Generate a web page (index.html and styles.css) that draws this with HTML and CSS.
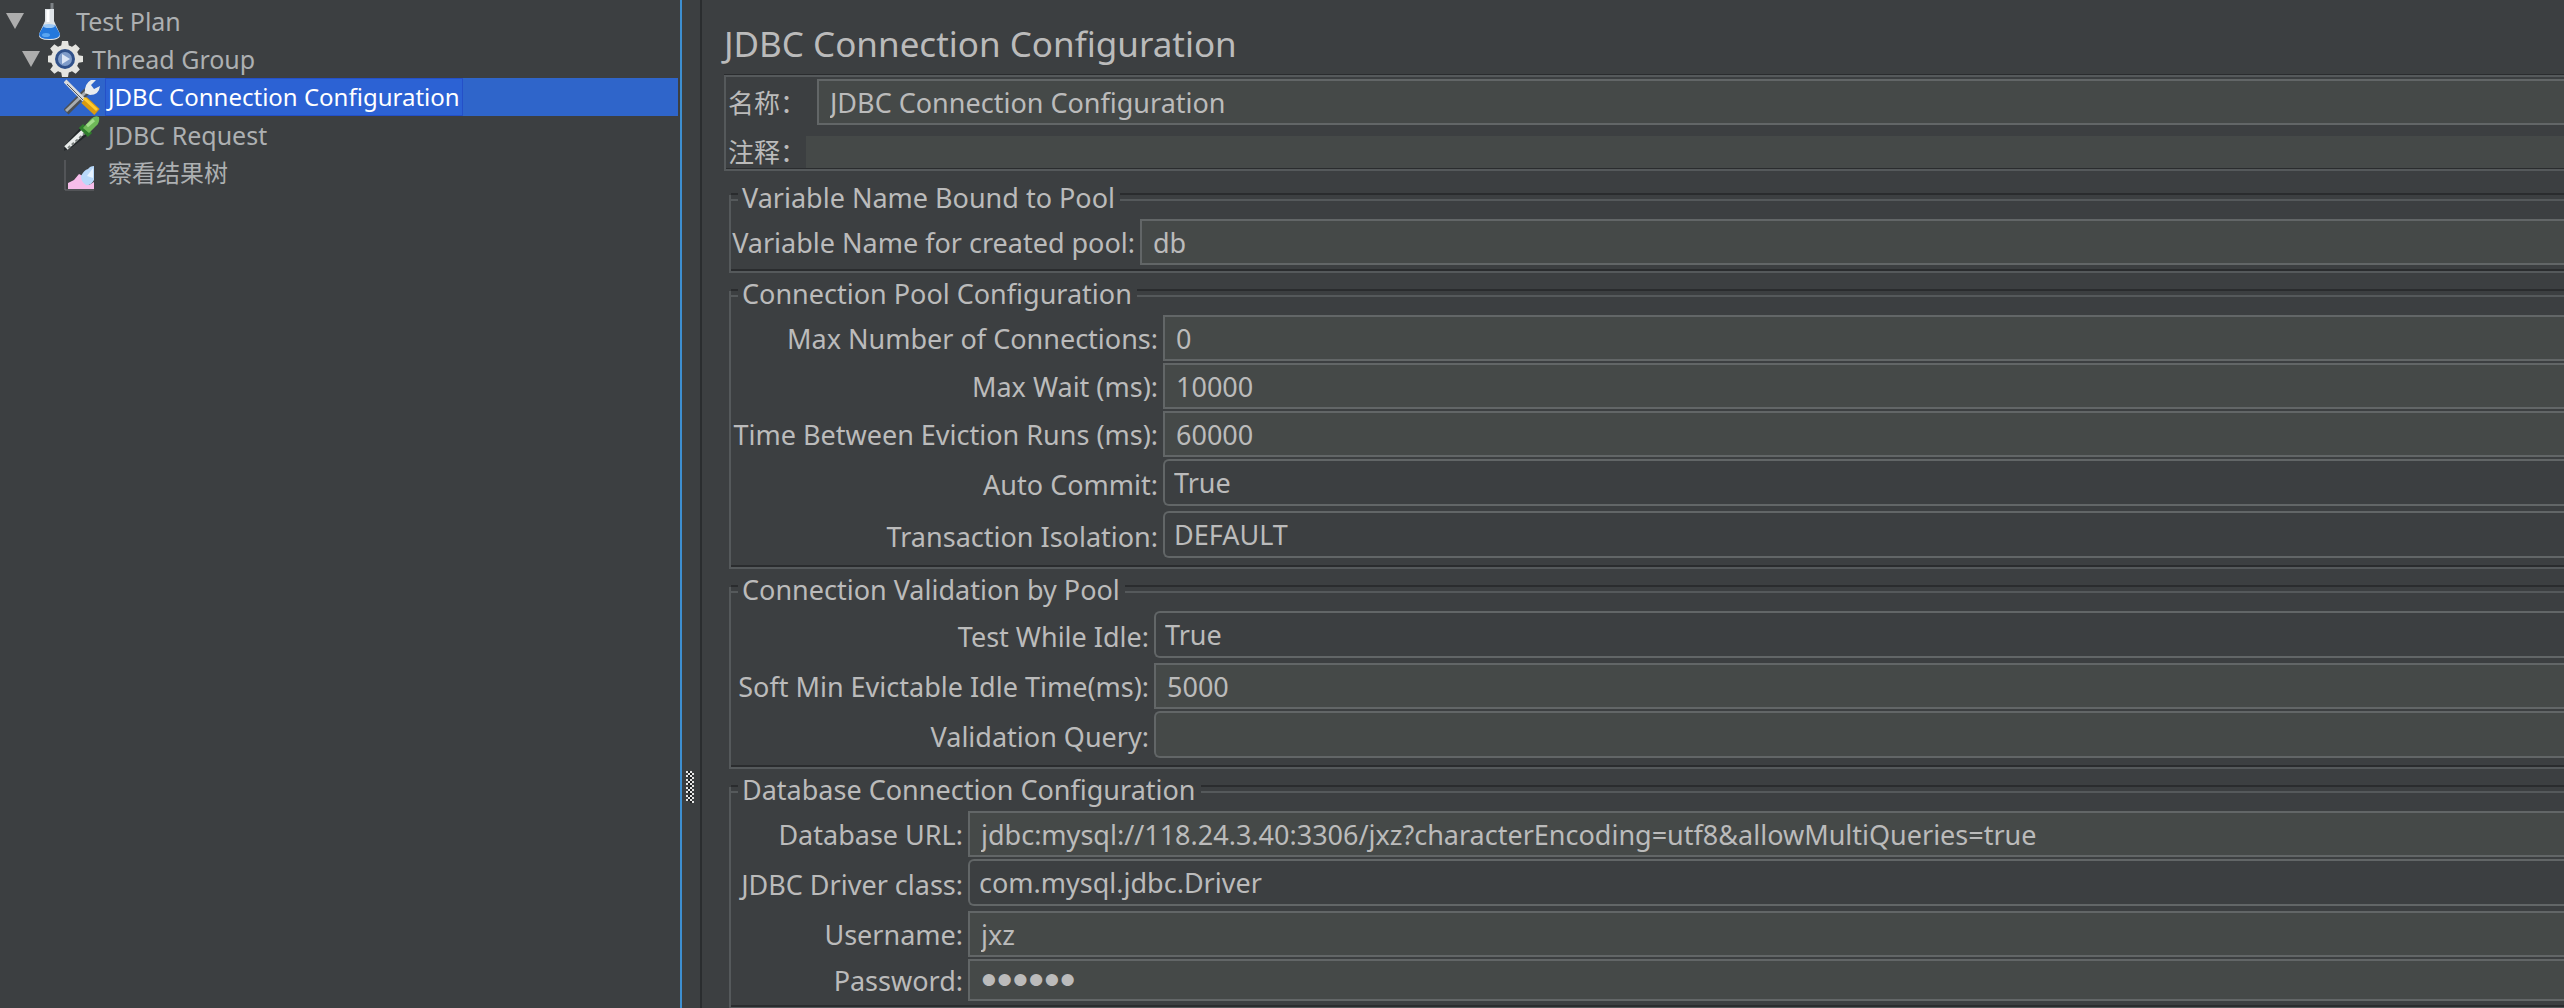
FILE: index.html
```html
<!DOCTYPE html>
<html lang="zh-CN">
<head>
  <meta charset="UTF-8">
  <meta name="viewport" content="width=device-width, initial-scale=1.0">
  <title>JDBC Connection Configuration</title>
  <link rel="stylesheet" href="styles.css">
</head>
<body>
  <div class="window">
    <nav class="sidebar">
      <ul class="tree">
        <li class="node level-0">
          <span class="toggle"></span>
          <svg class="icon" viewBox="0 0 36 38">
            <path d="M20 1 L20 8" stroke="#7d8286" stroke-width="3"/>
            <path d="M13 7 h9 v12 l6 13 q1 6 -11 6 q-11 0 -10 -6 l6 -13z" fill="#dfe4e8"/>
            <path d="M12 23 q6 3 11 0 l5 9 q0 5 -11 5 q-10 0 -10 -5z" fill="#2478dc"/>
            <ellipse cx="17" cy="24" rx="6" ry="2" fill="#9cc8f5"/>
            <path d="M16 8 v12" stroke="#fff" stroke-width="3"/>
            <ellipse cx="14" cy="33" rx="4" ry="2" fill="#5aa5f0"/>
          </svg>
          <span class="label">Test Plan</span>
        </li>
        <li class="node level-1">
          <span class="toggle"></span>
          <svg class="icon" viewBox="0 0 36 38">
            <g fill="#e4e4e0">
              <circle cx="17" cy="19" r="14"/>
              <path id="teeth" d="M14 1 h6 l1 6 h-8z M14 37 h6 l1 -6 h-8z M-1 16 v6 l6 1 v-8z M35 16 v6 l-6 1 v-8z"/>
              <use href="#teeth" transform="rotate(45 17 19)"/>
            </g>
            <circle cx="17" cy="19" r="10" fill="#30518a"/>
            <circle cx="17" cy="19" r="7" fill="#7f9cc9"/>
            <path d="M14 14 l8 5 -8 5z" fill="#dce6f5"/>
          </svg>
          <span class="label">Thread Group</span>
        </li>
        <li class="node level-2 selected">
          <span class="toggle leaf"></span>
          <svg class="icon" viewBox="0 0 36 38">
            <path d="M2 34 L23 13" stroke="#4c5054" stroke-width="7"/>
            <path d="M2 33 L24 12" stroke="#a9adb0" stroke-width="3"/>
            <path d="M21 15 q-1 -9 6 -13 l5 0 -5 5 3 4 6 -3 q-1 9 -10 9z" fill="#e9ecee"/>
            <path d="M1 3 L20 22" stroke="#d8dadc" stroke-width="4"/>
            <path d="M3 6 L19 22" stroke="#54585c" stroke-width="1"/>
            <path d="M20 22 L33 34" stroke="#d99a10" stroke-width="8"/>
            <path d="M20 20 L33 32" stroke="#ffcb2e" stroke-width="3"/>
          </svg>
          <span class="label">JDBC Connection Configuration</span>
        </li>
        <li class="node level-2">
          <span class="toggle leaf"></span>
          <svg class="icon" viewBox="0 0 36 38">
            <path d="M-1 35 L2 28 L17 11 L25 18 L7 32z" fill="#23282a"/>
            <path d="M2 32 L20 15" stroke="#e9eceb" stroke-width="5"/>
            <path d="M4 32 L21 17" stroke="#7c8280" stroke-width="2" stroke-dasharray="3 2"/>
            <path d="M17 10 L26 19" stroke="#2f7d2c" stroke-width="6"/>
            <path d="M19 12 L27 3 q4 -4 8 -2 q1 6 -3 9 l-7 7z" fill="#6fb858"/>
            <path d="M23 10 L30 4" stroke="#a3dc8c" stroke-width="3"/>
          </svg>
          <span class="label">JDBC Request</span>
        </li>
        <li class="node level-2">
          <span class="toggle leaf"></span>
          <svg class="icon" viewBox="0 0 36 38">
            <path d="M1 6 V36 H30" fill="none" stroke="#6a6d70" stroke-width="1"/>
            <path d="M4 35 v-6 l6 -3 5 -6 4 2 1 6 5 3 5 -3 v7z" fill="#f7bdea"/>
            <path d="M30 12 v14 q-3 6 -8 5 q-5 -3 -5 -9 q3 -6 7 -7 q2 -3 6 -3z" fill="#b9d9fa"/>
            <path d="M29 14 v10 l-6 -2z" fill="#e6f2ff"/>
          </svg>
          <span class="label zh">察看结果树</span>
        </li>
      </ul>
    </nav>

    <div class="splitter">
      <svg class="grip" viewBox="0 0 8 32">
        <defs>
          <pattern id="dots" width="8" height="8" patternUnits="userSpaceOnUse">
            <path d="M0 0h2v2h-2z M2 2h2v2h-2z M4 4h2v2h-2z M6 6h2v2h-2z M4 0h2v2h-2z M6 2h2v2h-2z M0 4h2v2h-2z" fill="#e6e6e6"/>
            <path d="M2 0h2v2h-2z M4 2h2v2h-2z M2 4h2v2h-2z M4 6h2v2h-2z" fill="#1d1f20"/>
          </pattern>
        </defs>
        <rect width="8" height="32" fill="url(#dots)"/>
      </svg>
    </div>

    <form class="panel">
      <h1>JDBC Connection Configuration</h1>

      <div class="naming">
        <div class="naming-row">
          <label for="name">名称：</label>
          <input type="text" id="name" value="JDBC Connection Configuration">
        </div>
        <div class="naming-row comment">
          <label for="comment">注释：</label>
          <input type="text" id="comment">
        </div>
      </div>

      <fieldset class="variable">
        <legend><span>Variable Name Bound to Pool</span></legend>
        <div class="fields">
          <label for="pool">Variable Name for created pool:</label>
          <input type="text" id="pool" value="db">
        </div>
      </fieldset>

      <fieldset class="pool">
        <legend><span>Connection Pool Configuration</span></legend>
        <div class="fields">
          <label for="max-connections">Max Number of Connections:</label>
          <input type="text" id="max-connections" value="0">
          <label for="max-wait">Max Wait (ms):</label>
          <input type="text" id="max-wait" value="10000">
          <label for="eviction">Time Between Eviction Runs (ms):</label>
          <input type="text" id="eviction" value="60000">
          <label for="auto-commit">Auto Commit:</label>
          <select id="auto-commit"><option>True</option><option>False</option></select>
          <label for="isolation">Transaction Isolation:</label>
          <select id="isolation"><option>DEFAULT</option></select>
        </div>
      </fieldset>

      <fieldset class="validation">
        <legend><span>Connection Validation by Pool</span></legend>
        <div class="fields">
          <label for="test-idle">Test While Idle:</label>
          <select id="test-idle"><option>True</option><option>False</option></select>
          <label for="idle-time">Soft Min Evictable Idle Time(ms):</label>
          <input type="text" id="idle-time" value="5000">
          <label for="query">Validation Query:</label>
          <input type="text" id="query" class="combo">
        </div>
      </fieldset>

      <fieldset class="database">
        <legend><span>Database Connection Configuration</span></legend>
        <div class="fields">
          <label for="url">Database URL:</label>
          <input type="text" id="url" value="jdbc:mysql://118.24.3.40:3306/jxz?characterEncoding=utf8&amp;allowMultiQueries=true">
          <label for="driver">JDBC Driver class:</label>
          <select id="driver"><option>com.mysql.jdbc.Driver</option></select>
          <label for="username">Username:</label>
          <input type="text" id="username" value="jxz">
          <label for="password">Password:</label>
          <input type="password" id="password" value="123456">
        </div>
      </fieldset>
    </form>
  </div>
</body>
</html>
```
FILE: styles.css
```css
* {
  margin: 0;
  padding: 0;
  box-sizing: border-box;
}
body {
  font-family: "Noto Sans", "Noto Sans CJK SC", sans-serif;
  font-size: 27px;
  background: #3c3f41;
  color: #bbbbbb;
  overflow: hidden;
}
.window {
  display: flex;
  height: 100vh;
}

/* tree */
.sidebar {
  flex: 0 0 682px;
  padding: 2px 2px 0 0;
  border-right: 2px solid #3d8fd1;
}
.tree {
  list-style: none;
  font-size: 25px;
}
.node {
  display: flex;
  align-items: center;
  height: 38px;
  padding-left: 6px;
  color: #adb0b2;
}
.level-1 {
  padding-left: 22px;
}
.level-2 {
  padding-left: 38px;
}
.selected {
  background: #2f65ca;
  color: #ffffff;
  font-size: 24px;
}
.toggle {
  border: 9px solid transparent;
  border-top: 16px solid #adadad;
  border-bottom: 0;
  margin-right: 8px;
}
.leaf {
  border-top-color: transparent;
}
.icon {
  width: 36px;
  height: 38px;
  margin-right: 5px;
}
.label {
  height: 38px;
  line-height: 38px;
  padding: 0 3px;
  white-space: nowrap;
}
.zh {
  font-size: 24px;
}
.selected .label {
  border: 1px solid #2450c8;
  background: #2c62d4;
  line-height: 36px;
  padding: 0 2px;
}

/* splitter */
.splitter {
  flex: 0 0 20px;
  padding-left: 4px;
  border-right: 2px solid #2a2d2f;
}
.grip {
  display: block;
  width: 8px;
  height: 32px;
  margin-top: 771px;
}

/* right panel */
.panel {
  flex: 1;
  min-width: 0;
  padding-left: 22px;
}
h1 {
  height: 74px;
  padding-top: 20px;
  font-size: 35px;
  line-height: 48px;
  font-weight: normal;
}
.naming {
  border: 2px solid #55595b;
  border-right: 0;
  box-shadow: 0 -1px #2a2c2e, inset 0 -1px #2a2c2e;
  padding: 2px 0 1px 2px;
  margin: 1px 0 24px;
}
.naming-row {
  display: flex;
  align-items: center;
  margin-bottom: 11px;
}
.naming-row label {
  flex: 0 0 89px;
  font-size: 26px;
  white-space: nowrap;
}
.comment {
  margin-bottom: 0;
}
.comment label {
  flex-basis: 78px;
  line-height: 32px;
}
.naming-row input {
  flex: 1;
}
.comment input {
  height: 32px;
  border: 0;
}

fieldset {
  margin: 0 0 18px 5px;
  border: 0;
  border-left: 2px solid #55595b;
  border-bottom: 2px solid #55595b;
  box-shadow: inset 0 -2px #2a2c2e;
  padding: 0 0 4px 7px;
}
legend {
  float: left;
  display: flex;
  align-items: center;
  width: calc(100% + 7px);
  height: 4px;
  margin-left: -7px;
}
legend::before,
legend::after {
  content: "";
  width: 7px;
  height: 4px;
  border-top: 2px solid #2a2c2e;
  border-bottom: 2px solid #55595b;
}
legend::after {
  flex: 1;
}
legend span {
  padding: 2px 5px 0 4px;
  line-height: 36px;
}
.fields {
  clear: both;
  display: grid;
  align-items: center;
  padding-top: 20px;
}
.variable .fields {
  grid-template-columns: 402px 1fr;
}
.pool .fields {
  grid-template-columns: 425px 1fr;
}
.validation .fields {
  grid-template-columns: 416px 1fr;
}
.database .fields {
  grid-template-columns: 230px 1fr;
}
.fields label {
  justify-self: end;
  padding-right: 5px;
  line-height: 36px;
  white-space: nowrap;
}

input,
select {
  width: 100%;
  height: 46px;
  border: 2px solid #626667;
  border-right: 0;
  border-radius: 0;
  background: #454948;
  color: #bbbbbb;
  font: inherit;
  padding: 0 11px;
  outline: none;
}
.fields input {
  margin-bottom: 2px;
}
.fields select,
.fields .combo {
  height: 47px;
  margin-bottom: 5px;
  border-radius: 6px 0 0 6px;
}
select {
  appearance: none;
  background: #3c3f41;
  padding: 0 9px;
}
.fields input[type=password] {
  height: 42px;
  font-family: "Liberation Sans", sans-serif;
  font-size: 45px;
}
```
